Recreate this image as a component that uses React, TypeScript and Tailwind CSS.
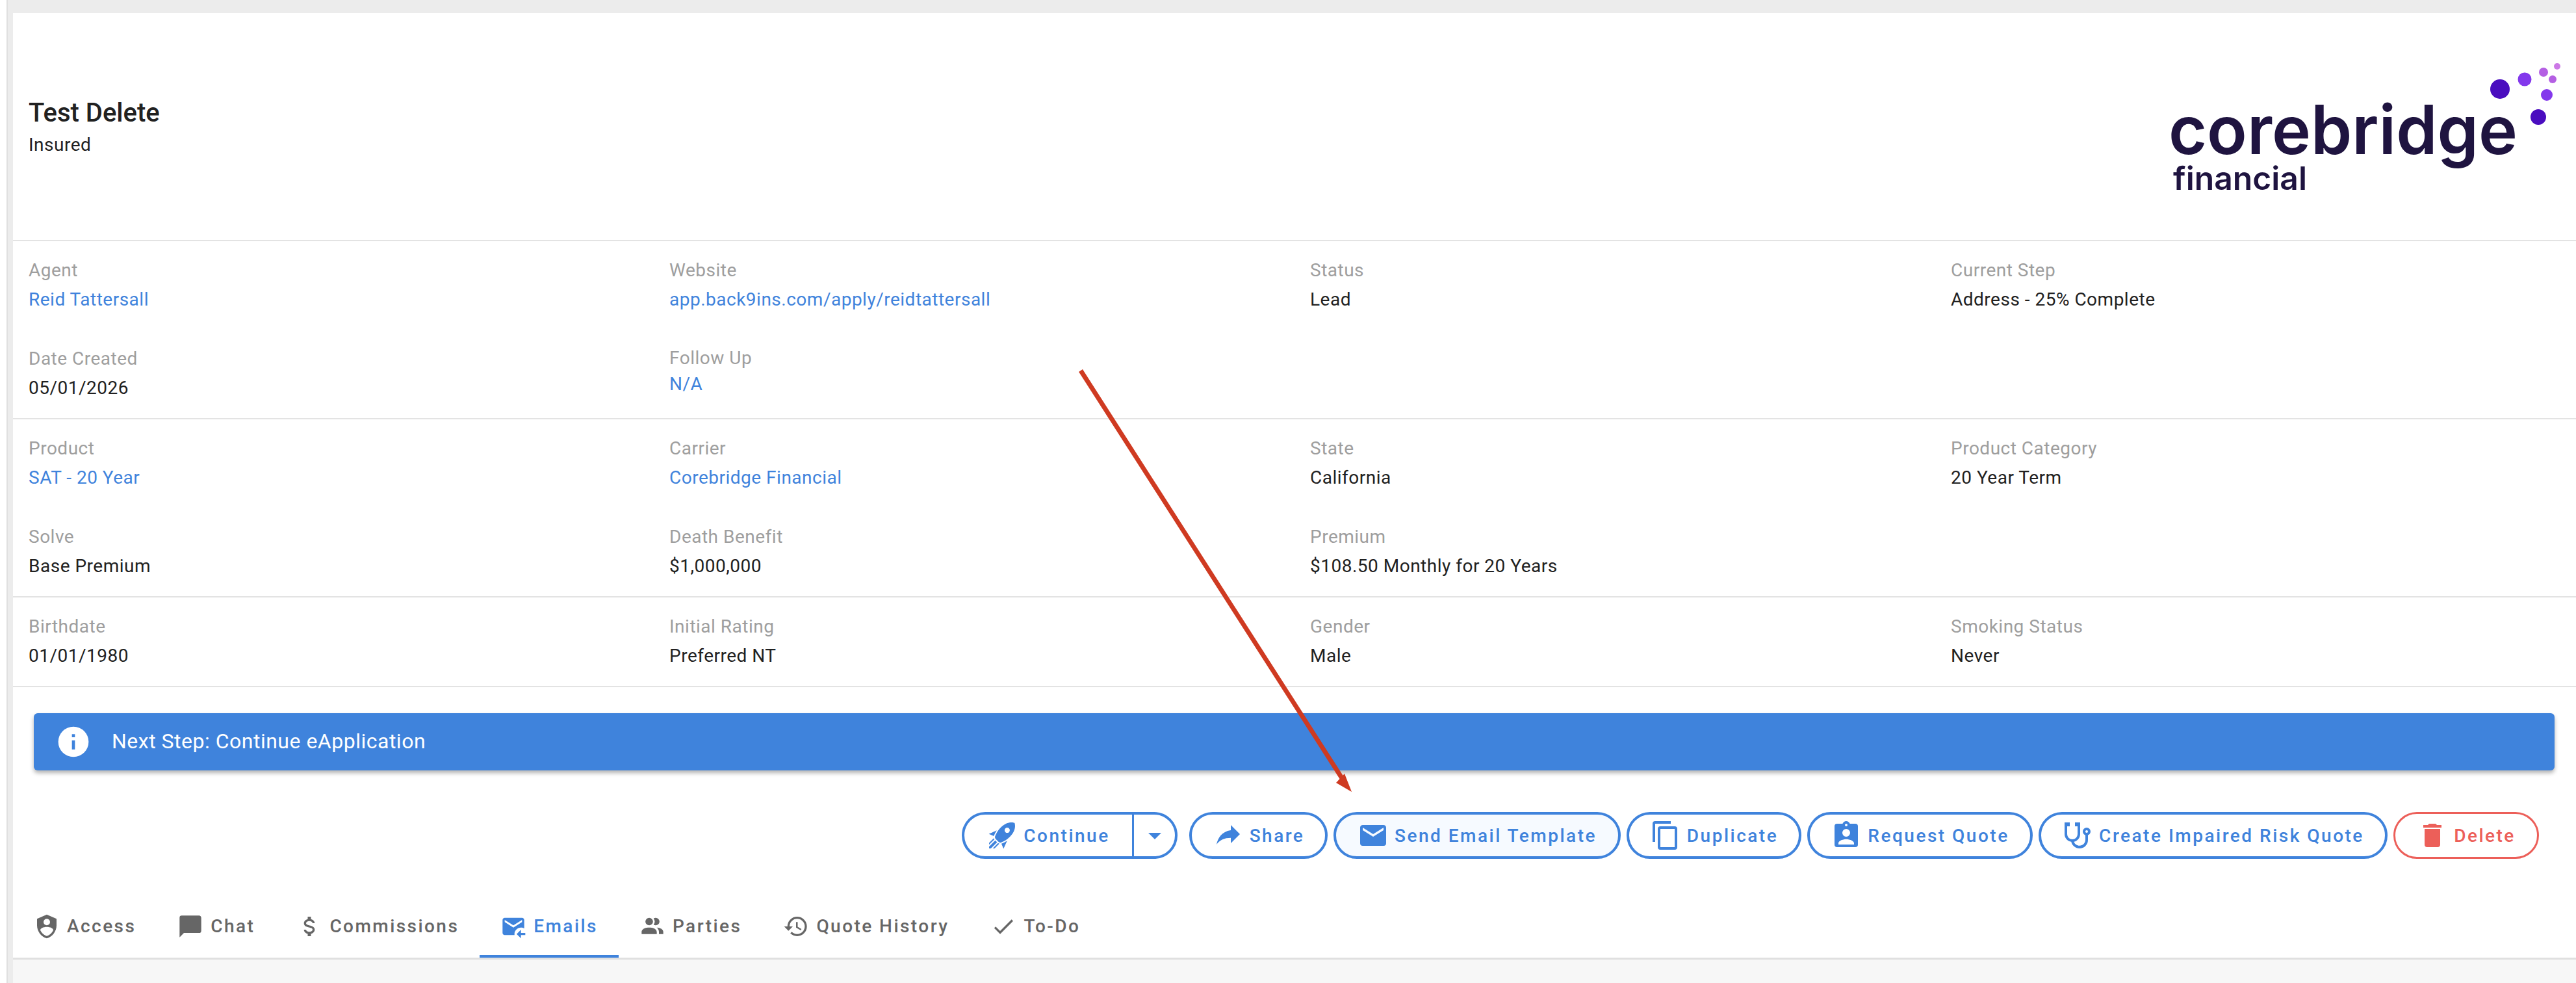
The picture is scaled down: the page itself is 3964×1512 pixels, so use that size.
import React from "react";

const P = {
  rocket: "M13.13 22.19L11.5 18.36C13.07 17.78 14.54 17 15.9 16.09L13.13 22.19M5.64 12.5L1.81 10.87L7.91 8.1C7 9.46 6.22 10.93 5.64 12.5M21.61 2.39C21.61 2.39 16.66 .269 11 5.93C8.81 8.12 7.5 10.53 6.65 12.64C6.37 13.39 6.56 14.21 7.11 14.77L9.24 16.89C9.79 17.45 10.61 17.63 11.36 17.35C13.5 16.53 15.88 15.19 18.07 13C23.73 7.34 21.61 2.39 21.61 2.39M14.54 9.46C13.76 8.68 13.76 7.41 14.54 6.63S16.59 5.85 17.37 6.63C18.14 7.41 18.15 8.68 17.37 9.46C16.59 10.24 15.32 10.24 14.54 9.46M8.88 16.53L7.47 15.12L8.88 16.53M6.24 22L9.88 18.36C9.54 18.27 9.21 18.12 8.91 17.91L4.83 22H6.24M2 22H3.41L8.18 17.24L6.76 15.83L2 20.59V22M2 19.17L6.09 15.09C5.88 14.79 5.73 14.47 5.64 14.12L2 17.76V19.17Z",
  share: "M21,11L14,4V8C7,9 4,14 3,19C5.5,15.5 9,13.9 14,13.9V18L21,11Z",
  email: "M20,8L12,13L4,8V6L12,11L20,6M20,4H4C2.89,4 2,4.89 2,6V18A2,2 0 0,0 4,20H20A2,2 0 0,0 22,18V6C22,4.89 21.1,4 20,4Z",
  copy: "M19,21H8V7H19M19,5H8A2,2 0 0,0 6,7V21A2,2 0 0,0 8,23H19A2,2 0 0,0 21,21V7A2,2 0 0,0 19,5M16,1H4A2,2 0 0,0 2,3V17H4V3H16V1Z",
  clipboard: "M19,3H14.82C14.4,1.84 13.3,1 12,1C10.7,1 9.6,1.84 9.18,3H5A2,2 0 0,0 3,5V19A2,2 0 0,0 5,21H19A2,2 0 0,0 21,19V5A2,2 0 0,0 19,3M12,3A1,1 0 0,1 13,4A1,1 0 0,1 12,5A1,1 0 0,1 11,4A1,1 0 0,1 12,3M12,7A3,3 0 0,1 15,10A3,3 0 0,1 12,13A3,3 0 0,1 9,10A3,3 0 0,1 12,7M18,19H6V18C6,16 10,14.9 12,14.9C14,14.9 18,16 18,18V19Z",
  stethoscope: "M19,8C19.56,8 20,8.43 20,9A1,1 0 0,1 19,10C18.43,10 18,9.55 18,9C18,8.43 18.43,8 19,8M2,2V11C2,13.96 4.19,16.5 7.14,16.91C7.76,19.92 10.42,22 13.5,22A6.5,6.5 0 0,0 20,15.5V11.81C21.16,11.39 22,10.29 22,9A3,3 0 0,0 19,6A3,3 0 0,0 16,9C16,10.29 16.84,11.4 18,11.81V15.41C18,17.91 16,19.91 13.5,19.91C11.5,19.91 9.82,18.7 9.22,16.9C12,16.3 14,13.8 14,11V2H10V5H12V11A4,4 0 0,1 8,15A4,4 0 0,1 4,11V5H6V2H2Z",
  trash: "M19,4H15.5L14.5,3H9.5L8.5,4H5V6H19M6,19A2,2 0 0,0 8,21H16A2,2 0 0,0 18,19V7H6V19Z",
  shield: "M12,1L3,5V11C3,16.55 6.84,21.74 12,23C17.16,21.74 21,16.55 21,11V5L12,1M12,5A3,3 0 0,1 15,8A3,3 0 0,1 12,11A3,3 0 0,1 9,8A3,3 0 0,1 12,5M17.13,17C15.92,18.85 14.11,20.24 12,20.92C9.89,20.24 8.08,18.85 6.87,17C6.53,16.5 6.24,16 6,15.47C6,13.82 8.71,12.47 12,12.47C15.29,12.47 18,13.79 18,15.47C17.76,16 17.47,16.5 17.13,17Z",
  message: "M20,2H4A2,2 0 0,0 2,4V22L6,18H20A2,2 0 0,0 22,16V4C22,2.89 21.1,2 20,2Z",
  usd: "M7,15H9C9,16.08 10.37,17 12,17C13.63,17 15,16.08 15,15C15,13.9 13.96,13.5 11.76,12.97C9.64,12.44 7,11.78 7,9C7,7.21 8.47,5.69 10.5,5.18V3H13.5V5.18C15.53,5.69 17,7.21 17,9H15C15,7.92 13.63,7 12,7C10.37,7 9,7.92 9,9C9,10.1 10.04,10.5 12.24,11.03C14.36,11.56 17,12.22 17,15C17,16.79 15.53,18.31 13.5,18.82V21H10.5V18.82C8.47,18.31 7,16.79 7,15Z",
  emailArrow: "M13 19C13 15.69 15.69 13 19 13C20.1 13 21.12 13.3 22 13.81V6C22 4.89 21.1 4 20 4H4C2.89 4 2 4.89 2 6V18C2 19.11 2.9 20 4 20H13.09C13.04 19.67 13 19.34 13 19M4 8V6L12 11L20 6V8L12 13L4 8M19 15L15 19L19 23V20H23V18H19V15Z",
  people: "M16 17V19H2V17S2 13 9 13 16 17 16 17M12.5 7.5A3.5 3.5 0 1 0 9 11A3.5 3.5 0 0 0 12.5 7.5M15.94 13A5.32 5.32 0 0 1 18 17V19H22V17S22 13.37 15.94 13M15 4A3.39 3.39 0 0 0 13.07 4.59A5 5 0 0 1 13.07 10.41A3.39 3.39 0 0 0 15 11A3.5 3.5 0 0 0 15 4Z",
  history: "M13.5,8H12V13L16.28,15.54L17,14.33L13.5,12.25V8M13,3A9,9 0 0,0 4,12H1L4.96,16.03L9,12H6A7,7 0 0,1 13,5A7,7 0 0,1 20,12A7,7 0 0,1 13,19C11.07,19 9.32,18.21 8.06,16.94L6.64,18.36C8.27,20 10.5,21 13,21A9,9 0 0,0 22,12A9,9 0 0,0 13,3",
  check: "M21,7L9,19L3.5,13.5L4.91,12.09L9,16.17L19.59,5.59L21,7Z",
  info: "M13,9H11V7H13M13,17H11V11H13M12,2A10,10 0 0,0 2,12A10,10 0 0,0 12,22A10,10 0 0,0 22,12A10,10 0 0,0 12,2Z",
  down: "M7,10L12,15L17,10H7Z",
};

function Icon({ d, className }: { d: string; className: string }) {
  return (
    <svg viewBox="0 0 24 24" className={className} fill="currentColor">
      <path d={d} />
    </svg>
  );
}

type Cell = { label?: string; value?: string; link?: boolean; tight?: boolean };

function Field({ label, value, link, tight }: Cell) {
  if (!label) return <div />;
  return (
    <div className={tight ? "pl-[24px] -mt-[1px]" : "pl-[24px]"}>
      <div className="text-[28px] leading-[45px] tracking-[0.5px] text-[#9e9e9e]">{label}</div>
      <div
        className={
          (tight ? "leading-[35px] " : "leading-[45px] ") +
          "text-[28px] tracking-[0.5px] " +
          (link ? "text-[#3f83dc]" : "text-[#212121]")
        }
      >
        {value}
      </div>
    </div>
  );
}

const sections: Cell[][] = [
  [
    { label: "Agent", value: "Reid Tattersall", link: true },
    { label: "Website", value: "app.back9ins.com/apply/reidtattersall", link: true },
    { label: "Status", value: "Lead" },
    { label: "Current Step", value: "Address - 25% Complete" },
    { label: "Date Created", value: "05/01/2026" },
    { label: "Follow Up", value: "N/A", link: true, tight: true },
    {},
    {},
  ],
  [
    { label: "Product", value: "SAT - 20 Year", link: true },
    { label: "Carrier", value: "Corebridge Financial", link: true },
    { label: "State", value: "California" },
    { label: "Product Category", value: "20 Year Term" },
    { label: "Solve", value: "Base Premium" },
    { label: "Death Benefit", value: "$1,000,000" },
    { label: "Premium", value: "$108.50 Monthly for 20 Years" },
    {},
  ],
];

const buttons = [
  { d: P.share, text: "Share", w: "w-[213px]" },
  { d: P.email, text: "Send Email Template", w: "w-[442px]", active: true },
  { d: P.copy, text: "Duplicate", w: "w-[269px]" },
  { d: P.clipboard, text: "Request Quote", w: "w-[347px]" },
  { d: P.stethoscope, text: "Create Impaired Risk Quote", w: "w-[537px]" },
];

const tabs = [
  { d: P.shield, text: "Access" },
  { d: P.message, text: "Chat" },
  { d: P.usd, text: "Commissions" },
  { d: P.emailArrow, text: "Emails", active: true },
  { d: P.people, text: "Parties" },
  { d: P.history, text: "Quote History" },
  { d: P.check, text: "To-Do" },
];

function Logo() {
  return (
    <svg viewBox="0 0 640 230" className="w-[640px] h-[230px] mt-[20px]">
      <text x="13" y="147" fontFamily="Inter" fontWeight="600" fontSize="104" fill="#1f1440" textLength="537" lengthAdjust="spacingAndGlyphs">
        corebridge
      </text>
      <text x="20" y="202" fontFamily="Inter" fontWeight="600" fontSize="49" fill="#1f1440" textLength="206" lengthAdjust="spacingAndGlyphs">
        financial
      </text>
      <circle cx="523" cy="47" r="15" fill="#4a0dbf" />
      <circle cx="561" cy="32" r="10.5" fill="#8338ec" />
      <circle cx="590" cy="21" r="7" fill="#b45fe3" />
      <circle cx="611" cy="12" r="5" fill="#cc79e6" />
      <circle cx="604" cy="32" r="6" fill="#b45fe3" />
      <circle cx="595" cy="56" r="9" fill="#8338ec" />
      <circle cx="582" cy="90" r="12" fill="#4a0dbf" />
    </svg>
  );
}

export default function App() {
  return (
    <div className="relative w-[3964px] h-[1512px] overflow-hidden bg-white font-['Roboto',sans-serif] flex">
      <div className="w-[10px] bg-white" />
      <div className="w-[10px] bg-[#ececec] border-l-[2px] border-[#e0e0e0]" />
      <div className="flex-1 flex flex-col min-w-0 bg-[#f7f7f7]">
        <div className="h-[20px] bg-[#ececec]" />
        <div className="bg-white flex flex-col">
          <div className="h-[349px] flex items-center justify-between pl-[24px]">
            <div className="mt-[5px]">
              <div className="text-[40px] leading-[52px] font-medium text-[#212121]">Test Delete</div>
              <div className="text-[28px] leading-[46px] tracking-[0.5px] text-[#212121]">Insured</div>
            </div>
            <Logo />
          </div>
          {sections.map((cells, i) => (
            <div key={i} className="border-t-[2px] border-[#e3e3e3] h-[274px] pt-[22px] grid grid-cols-4 grid-rows-[90px_90px] gap-y-[46px]">
              {cells.map((c, j) => (
                <Field key={j} {...c} />
              ))}
            </div>
          ))}
          <div className="border-y-[2px] border-[#e3e3e3] h-[140px] pt-[22px] grid grid-cols-4">
            <Field label="Birthdate" value="01/01/1980" />
            <Field label="Initial Rating" value="Preferred NT" />
            <Field label="Gender" value="Male" />
            <Field label="Smoking Status" value="Never" />
          </div>
          <div className="pt-[40px] pl-[32px] pr-[33px]">
            <div className="h-[88px] rounded-[6px] bg-[#3f83dc] shadow-[0_4px_6px_rgba(0,0,0,0.3)] flex items-center pl-[33px] text-white">
              <Icon d={P.info} className="w-[56px] h-[56px]" />
              <span className="ml-[31px] pb-[3px] text-[32px] tracking-[0.5px]">Next Step: Continue eApplication</span>
            </div>
          </div>
          <div className="mt-[64px] pr-[57px] flex justify-end gap-[9px] text-[28px] font-medium tracking-[2.5px] text-[#3f83dc]">
            <div className="h-[72px] w-[332px] mr-[9px] rounded-full border-[4px] border-[#3f83dc] flex items-stretch">
              <div className="w-[261px] flex items-center justify-center gap-[9px] border-r-[3px] border-[#3f83dc]">
                <Icon d={P.rocket} className="w-[48px] h-[48px]" />
                <span className="pt-[2px]">Continue</span>
              </div>
              <div className="flex-1 flex items-center justify-center">
                <Icon d={P.down} className="w-[48px] h-[48px]" />
              </div>
            </div>
            {buttons.map((b) => (
              <div
                key={b.text}
                className={
                  "h-[72px] rounded-full border-[4px] border-[#3f83dc] flex items-center justify-center gap-[9px] " +
                  b.w +
                  (b.active ? " bg-[#f6faff]" : "")
                }
              >
                <Icon d={b.d} className="w-[48px] h-[48px]" />
                <span className="pt-[2px]">{b.text}</span>
              </div>
            ))}
            <div className="h-[72px] w-[224px] rounded-full border-[3px] border-[#ec5f59] text-[#ec5f59] flex items-center justify-center gap-[9px]">
              <Icon d={P.trash} className="w-[48px] h-[48px]" />
              <span className="pt-[2px]">Delete</span>
            </div>
          </div>
          <div className="mt-[56px] flex h-[96px] text-[28px] font-medium tracking-[2.45px] text-[#666666]">
            {tabs.map((t) => (
              <div
                key={t.text}
                className={
                  "px-[32px] pt-[4px] flex items-center gap-[11px] border-b-[4px] " +
                  (t.active ? "border-[#3f83dc] text-[#3f83dc]" : "border-transparent")
                }
              >
                <Icon d={t.d} className="w-[40px] h-[40px]" />
                <span>{t.text}</span>
              </div>
            ))}
          </div>
        </div>
        <div className="h-[3px] bg-[#e0e0e0]" />
      </div>
      <svg className="absolute inset-0 w-[3964px] h-[1512px] pointer-events-none" viewBox="0 0 3964 1512">
        <line x1="1663" y1="570" x2="2067" y2="1200" stroke="#cf3a21" strokeWidth="7" />
        <polygon points="2080,1218 2056,1204 2069,1190" fill="#cf3a21" />
      </svg>
    </div>
  );
}
